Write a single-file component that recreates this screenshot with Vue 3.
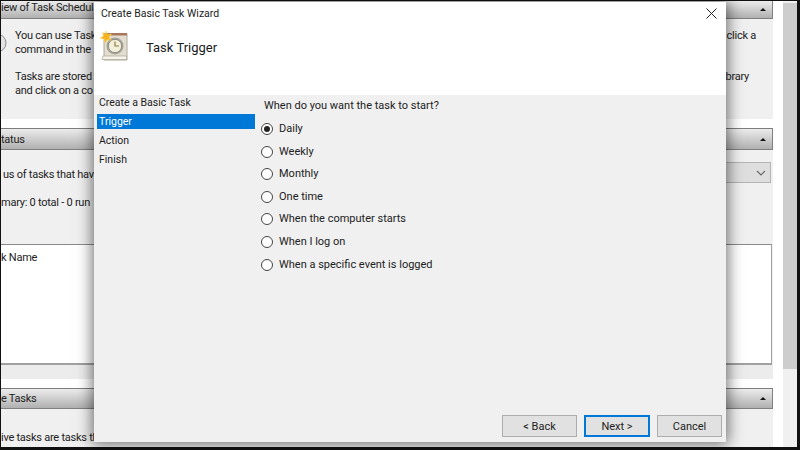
<script setup>
const options = ['Daily', 'Weekly', 'Monthly', 'One time', 'When the computer starts', 'When I log on', 'When a specific event is logged']
const steps = ['Create a Basic Task', 'Trigger', 'Action', 'Finish']
</script>

<template>
  <div class="screen">
    <div class="frame">
      <main class="panes">
        <section class="pane">
          <header class="head first"><span class="head-label">iew of Task Schedul</span><i class="caret"></i></header>
          <div class="body overview">
            <svg class="info" width="6" height="20" viewBox="0 0 6 20"><circle cx="-4" cy="10" r="9" fill="#e4e4e4" stroke="#8a8a8a"/></svg>
            <p class="line l1"><span>You can use Task</span><span>click a</span></p>
            <p class="line"><span>command in the</span></p>
            <p class="line l3"><span>Tasks are stored i</span><span class="lib">brary</span></p>
            <p class="line"><span>and click on a co</span></p>
          </div>
        </section>
        <section class="pane second">
          <header class="head tall"><span>tatus</span><i class="caret"></i></header>
          <div class="body status">
            <div class="filter"><svg width="10" height="6" viewBox="0 0 10 6"><path d="M1 1l4 4 4-4" fill="none" stroke="#666" stroke-width="1.1"/></svg></div>
            <p class="status-text us">us of tasks that have</p>
            <p class="status-text sum">mary: 0 total - 0 run</p>
            <div class="list"><span>k Name</span></div>
            <div class="list-foot"></div>
          </div>
        </section>
        <section class="pane third">
          <header class="head"><span>e Tasks</span><i class="caret"></i></header>
          <div class="body active"><span>ive tasks are tasks th</span></div>
        </section>
      </main>
      <aside class="scroll"><div class="thumb"></div></aside>
    </div>

    <div class="dialog">
      <div class="top">
        <div class="title-row">
          <span class="title">Create Basic Task Wizard</span>
          <svg class="close" width="11" height="11" viewBox="0 0 11 11"><path d="M.5.5l10 10M10.5.5l-10 10" stroke="#222" stroke-width="1"/></svg>
        </div>
        <div class="heading">
          <svg class="task-icon" width="30" height="30" viewBox="0 0 30 30">
            <path d="M6 3h23v26H6z" fill="#e2ddd0" stroke="#b0aa9b"/>
            <path d="M6 2h23v2.500H6z" fill="#a9765a"/>
            <path d="M5 25h23.500v3.500H4z" fill="#f7f4ec" stroke="#a8a497" stroke-width=".7"/>
            <circle cx="17" cy="15" r="8.500" fill="#a7a397"/>
            <circle cx="17" cy="15" r="6.600" fill="#f4efd9" stroke="#777" stroke-width=".7"/>
            <path d="M17 10.500V15h4" fill="none" stroke="#8c7f45" stroke-width="1.200"/>
            <path d="M8 0l1.400 3.600L13.500 3 11 6.200l2.300 3.400-3.900-1L7 12 6.400 8 2 7.200l3.600-2.100L4.500 1.200 7.300 3.500z" fill="#f7b21b" stroke="#f9d65c" stroke-width=".5"/>
          </svg>
          <h1>Task Trigger</h1>
        </div>
      </div>
      <div class="content">
        <nav class="steps">
          <div v-for="s in steps" :key="s" class="step" :class="{ on: s === 'Trigger' }">{{ s }}</div>
        </nav>
        <div class="form">
          <p class="question">When do you want the task to start?</p>
          <div class="radios">
            <div v-for="(o, i) in options" :key="o" class="radio-row">
              <span class="radio" :class="{ checked: i === 0 }"></span>
              <span>{{ o }}</span>
            </div>
          </div>
        </div>
      </div>
      <footer class="buttons">
        <div class="btn back">&lt; Back</div>
        <div class="btn next">Next &gt;</div>
        <div class="btn cancel">Cancel</div>
      </footer>
    </div>
  </div>
</template>

<style>
html, body { margin: 0; }
</style>

<style scoped>
.screen {
  width: 800px;
  height: 450px;
  position: relative;
  overflow: hidden;
  background: #111;
  font-family: Roboto, "Noto Sans", sans-serif;
  font-size: 11px;
  color: #222;
}
.frame {
  height: 446px;
  margin: 1px 3px 0 1px;
  background: #fff;
  display: flex;
  overflow: hidden;
}
.panes { width: 772px; flex: none; letter-spacing: -.25px; }
.pane { overflow: hidden; }
.second, .third { margin-top: 9px; }
.head {
  height: 21px;
  box-sizing: border-box;
  display: flex;
  align-items: center;
  justify-content: space-between;
  padding-right: 6px;
  background: linear-gradient(#ececec, #b0b0b0);
  border-top: 1px solid #7d7d7d;
  border-bottom: 1px solid #808080;
  border-right: 1px solid #808080;
  white-space: nowrap;
}
.head.first { height: 18px; border-top: 0; }
.head.tall { height: 22px; }
.head-label { margin-top: -4px; }
.caret {
  width: 0;
  height: 0;
  border: 3px solid transparent;
  border-top: 0;
  border-bottom: 3px solid #111;
}
.body { background: #f0f0f0; white-space: nowrap; overflow: hidden; }
.overview {
  height: 100px;
  box-sizing: border-box;
  padding-top: 10px;
  position: relative;
}
.info { position: absolute; left: 0; top: 14px; }
.line {
  margin: 0;
  height: 14px;
  line-height: 14px;
  padding-left: 14px;
  display: flex;
  justify-content: space-between;
  padding-right: 17px;
}
.l3 { margin-top: 13px; padding-right: 24px; }
.status {
  height: 229px;
  box-sizing: border-box;
  position: relative;
  padding-top: 18px;
}
.filter {
  position: absolute;
  right: 2px;
  top: 12px;
  width: 200px;
  height: 21px;
  box-sizing: border-box;
  background: #dedede;
  border: 1px solid #b4b4b4;
  display: flex;
  align-items: center;
  justify-content: flex-end;
  padding-right: 4px;
}
.status-text { margin: 0; height: 14px; line-height: 14px; }
.us { padding-left: 2px; }
.sum { margin-top: 14px; }
.list {
  margin-top: 34px;
  margin-right: 1px;
  height: 121px;
  box-sizing: border-box;
  background: #fff;
  border-top: 1px solid #8a8a8a;
  border-bottom: 2px solid #a0a0a0;
  border-right: 1px solid #a0a0a0;
  padding-top: 6px;
}
.list span { display: block; }
.list-foot { height: 14px; background: #ececec; }
.active { height: 38px; padding-top: 22px; box-sizing: border-box; }
.scroll {
  margin-left: 10px;
  width: 14px;
  height: 100%;
  background: #f0f0f0;
  padding-top: 2px;
  box-sizing: border-box;
}
.thumb { height: 366px; background: #cdcdcd; }

.dialog {
  position: absolute;
  left: 94px;
  top: 2px;
  width: 632px;
  height: 440px;
  background: #f0f0f0;
  box-shadow: 0 0 14px 2px rgba(0, 0, 0, .55);
  display: flex;
  flex-direction: column;
}
.top { height: 93px; background: #fff; flex: none; }
.title-row {
  display: flex;
  justify-content: space-between;
  align-items: center;
  height: 21px;
  padding: 0 9px 0 7px;
}
.title { font-size: 10.5px; margin-top: 2px; }
.close { margin-top: 1px; }
.heading { display: flex; align-items: center; height: 44px; padding-left: 4px; margin-top: 1px; }
.task-icon { flex: none; }
h1 {
  margin: 2px 0 0 18px;
  font-weight: 400;
  font-size: 13px;
  color: #1a1a1a;
}
.content { flex: 1; display: flex; min-height: 0; }
.steps { width: 161px; flex: none; padding-left: 3px; margin-top: -2px; font-size: 10.5px; }
.step {
  height: 19px;
  line-height: 19px;
  padding-left: 2px;
  box-sizing: border-box;
  width: 158px;
}
.step.on { background: #0078d7; color: #fff; height: 15px; line-height: 15px; margin: 2px 0; }
.form { flex: 1; padding-top: 3px; }
.question { margin: 0 0 0 6px; height: 16px; line-height: 16px; }
.radios { margin-top: 8px; margin-left: 3px; display: flex; flex-direction: column; gap: 8.6px; }
.radio-row { display: flex; align-items: center; gap: 6px; height: 14px; line-height: 14px; }
.radio {
  width: 12px;
  height: 12px;
  box-sizing: border-box;
  border: 1px solid #444;
  border-radius: 50%;
  background: #fff;
  position: relative;
  flex: none;
}
.radio.checked::after {
  content: "";
  position: absolute;
  inset: 2px;
  border-radius: 50%;
  background: #222;
}
.buttons {
  height: 27px;
  box-sizing: border-box;
  flex: none;
  display: flex;
  justify-content: flex-end;
  gap: 7px;
  padding: 0 4px 5px 0;
}
.btn {
  height: 22px;
  box-sizing: border-box;
  background: #e1e1e1;
  border: 1px solid #adadad;
  display: flex;
  align-items: center;
  justify-content: center;
}
.back { width: 75px; }
.next { width: 66px; border: 2px solid #0078d7; }
.cancel { width: 65px; }
</style>
